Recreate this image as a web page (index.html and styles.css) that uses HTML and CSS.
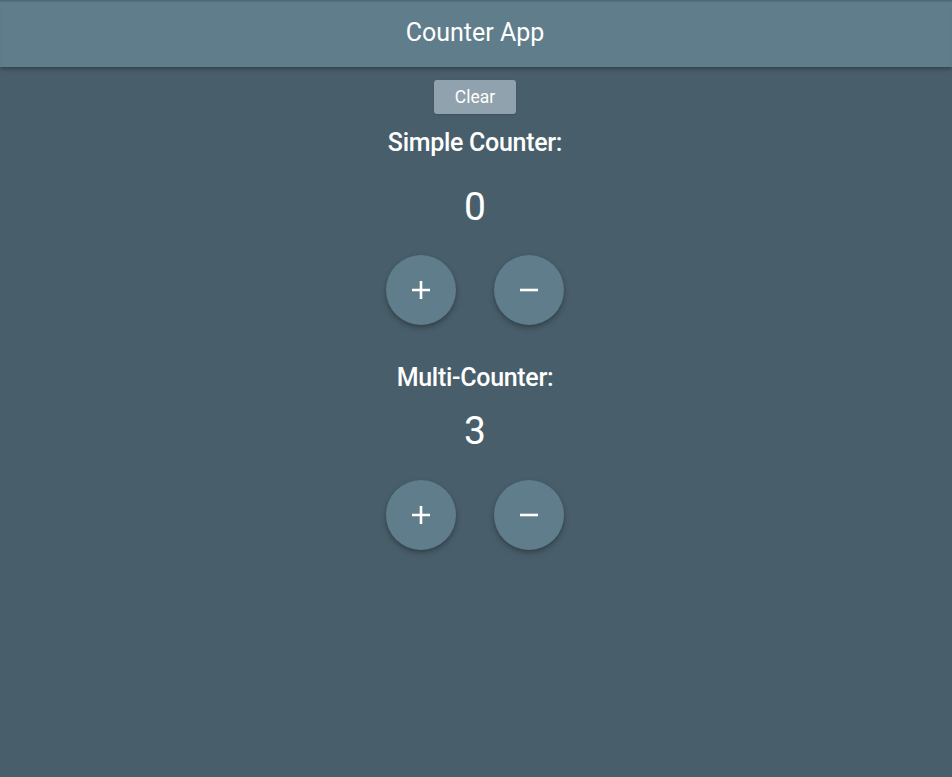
FILE: index.html
```html
<!DOCTYPE html>
<html>
<head>
<meta charset="utf-8">
<link rel="stylesheet" href="styles.css">
</head>
<body>
<header class="app-bar"><h1 class="app-title">Counter App</h1></header>
<main class="content">
  <button class="clear-btn">Clear</button>
  <section class="counter">
    <h2 class="counter-label">Simple Counter:</h2>
    <div class="counter-value">0</div>
    <div class="counter-actions">
      <button class="fab" aria-label="increment"><svg width="20" height="20" viewBox="0 0 20 20"><path d="M10 1v18M1 10h18" stroke="#fff" stroke-width="2.6" fill="none"/></svg></button>
      <button class="fab" aria-label="decrement"><svg width="20" height="20" viewBox="0 0 20 20"><path d="M1 10h18" stroke="#fff" stroke-width="2.6" fill="none"/></svg></button>
    </div>
  </section>
  <section class="counter counter--multi">
    <h2 class="counter-label">Multi-Counter:</h2>
    <div class="counter-value">3</div>
    <div class="counter-actions">
      <button class="fab" aria-label="increment"><svg width="20" height="20" viewBox="0 0 20 20"><path d="M10 1v18M1 10h18" stroke="#fff" stroke-width="2.6" fill="none"/></svg></button>
      <button class="fab" aria-label="decrement"><svg width="20" height="20" viewBox="0 0 20 20"><path d="M1 10h18" stroke="#fff" stroke-width="2.6" fill="none"/></svg></button>
    </div>
  </section>
</main>
</body>
</html>
```
FILE: styles.css
```css
html, body {
  margin: 0;
  height: 100%;
}
body {
  background: #485e6a;
  font-family: Roboto, "Liberation Sans", sans-serif;
  color: #fff;
}
.app-bar {
  height: 67px;
  box-sizing: border-box;
  padding: 0 2px 3px 0;
  background: #607d8b;
  display: flex;
  align-items: center;
  justify-content: center;
  box-shadow: 0 2px 4px rgba(0,0,0,0.3), inset 0 2px 2px -1px rgba(0,0,0,0.25);
  position: relative;
}
.app-title {
  margin: 0;
  font-size: 25px;
  font-weight: 400;
}
.content {
  display: flex;
  flex-direction: column;
  align-items: center;
  padding-right: 2px;
}
.clear-btn {
  margin-top: 13px;
  width: 82px;
  height: 34px;
  border: none;
  border-radius: 3px;
  background: #8fa2ad;
  color: #fff;
  font-family: Roboto, "Liberation Sans", sans-serif;
  font-size: 17.5px;
  box-shadow: 0 1px 2px rgba(0,0,0,0.15);
  padding: 0;
}
.counter {
  display: flex;
  flex-direction: column;
  align-items: center;
}
.counter-label {
  margin: 14px 0 0;
  font-size: 25px;
  line-height: 30px;
  font-weight: 500;
  letter-spacing: -0.3px;
}
.counter-value {
  margin-top: 26px;
  font-size: 39px;
  line-height: 46px;
}
.counter-actions {
  margin-top: 25px;
  display: flex;
  gap: 38px;
}
.counter--multi .counter-label { margin-top: 38px; }
.counter--multi .counter-value { margin-top: 15px; }
.counter--multi .counter-actions { margin-top: 26px; }
.fab {
  width: 70px;
  height: 70px;
  border-radius: 50%;
  border: none;
  padding: 0;
  background: #607d8b;
  display: flex;
  align-items: center;
  justify-content: center;
  box-shadow: 0 3px 6px rgba(0,0,0,0.22), 0 2px 3px rgba(0,0,0,0.12);
}
```
